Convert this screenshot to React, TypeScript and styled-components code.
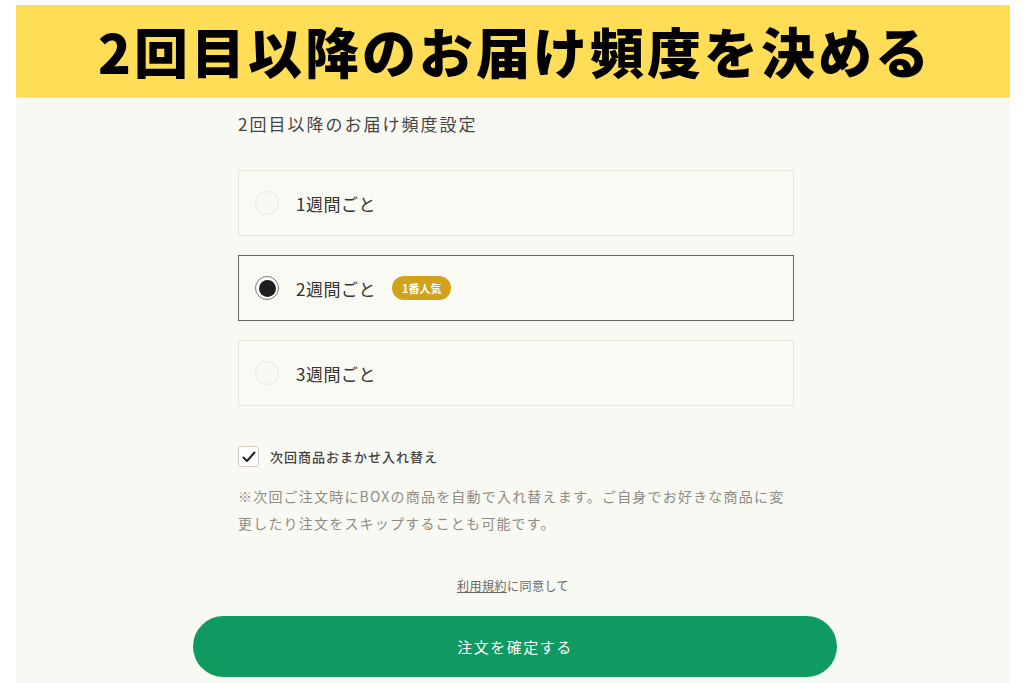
import React, { useState } from "react";
import styled, { createGlobalStyle } from "styled-components";

const GlobalStyle = createGlobalStyle`
  html, body {
    margin: 0;
    padding: 0;
    background: #ffffff;
  }
  body {
    font-family: "Noto Sans CJK JP", "Noto Sans", sans-serif;
    color: #333;
  }
`;

const Page = styled.div`
  padding: 5px 14px 0 16px;
  height: 683px;
  box-sizing: border-box;
  overflow: hidden;
`;

const Panel = styled.div`
  background: #f9f9f3;
  height: 678px;
  display: flex;
  flex-direction: column;
`;

const Header = styled.div`
  height: 93px;
  flex-shrink: 0;
  background: #ffdd57;
  display: flex;
  align-items: center;
  justify-content: center;
  border-bottom: 1px solid #fbe9a4;
  box-sizing: border-box;
`;

const HeaderTitle = styled.h1`
  margin: 0;
  font-size: 54px;
  font-weight: 900;
  letter-spacing: 3px;
  color: #000;
  line-height: 1;
  padding-left: 4px;
`;

const Content = styled.div`
  width: 556px;
  margin: 0 auto;
  padding-top: 15px;
  padding-left: 6px;
  display: flex;
  flex-direction: column;
`;

const SectionTitle = styled.div`
  font-size: 17px;
  letter-spacing: 2px;
  line-height: 22px;
  color: #444;
  margin-bottom: 35px;
`;

const OptionList = styled.div`
  display: flex;
  flex-direction: column;
  gap: 19px;
`;

const OptionBox = styled.label<{ $selected: boolean }>`
  height: 66px;
  box-sizing: border-box;
  display: flex;
  align-items: center;
  padding-left: 16px;
  border: ${(p) => (p.$selected ? "1.5px solid #666" : "1px solid #ebe6d3")};
  background: #fafaf4;
  cursor: pointer;
`;

const Radio = styled.span<{ $selected: boolean }>`
  width: 24px;
  height: 24px;
  border-radius: 50%;
  box-sizing: border-box;
  border: ${(p) => (p.$selected ? "1.5px solid #777" : "1px solid #e8e8e4")};
  background: ${(p) => (p.$selected ? "#fff" : "#f8f8f4")};
  display: flex;
  align-items: center;
  justify-content: center;
  flex-shrink: 0;

  &::after {
    content: "";
    display: ${(p) => (p.$selected ? "block" : "none")};
    width: 17px;
    height: 17px;
    border-radius: 50%;
    background: #1e1e1e;
  }
`;

const OptionLabel = styled.span`
  margin-left: 17px;
  font-size: 17px;
  letter-spacing: 0.5px;
  color: #333;
`;

const Badge = styled.span`
  margin-left: 16px;
  height: 24px;
  padding: 0 10px;
  border-radius: 12px;
  background: #d2a21a;
  color: #fff;
  font-size: 11px;
  font-weight: 700;
  display: inline-flex;
  align-items: center;
`;

const CheckRow = styled.label`
  display: flex;
  align-items: center;
  margin-top: 40px;
  cursor: pointer;
`;

const CheckBox = styled.span`
  width: 21px;
  height: 21px;
  box-sizing: border-box;
  border: 1px solid #cfcabb;
  border-radius: 3px;
  background: #fff;
  display: flex;
  align-items: center;
  justify-content: center;
`;

const CheckLabel = styled.span`
  margin-left: 11px;
  font-size: 13px;
  font-weight: 500;
  letter-spacing: 1px;
  color: #444;
`;

const Note = styled.p`
  margin: 16px 0 0;
  font-size: 14px;
  line-height: 27px;
  letter-spacing: 1.2px;
  white-space: nowrap;
  color: #8f8c84;
`;

const Terms = styled.div`
  margin-top: 40px;
  text-align: center;
  font-size: 12px;
  letter-spacing: 0.5px;
  line-height: 18px;
  color: #666;
`;

const TermsLink = styled.span`
  text-decoration: underline;
  color: #666;
`;

const SubmitButton = styled.button`
  align-self: center;
  flex-shrink: 0;
  margin-top: 21px;
  margin-left: 4px;
  width: 644px;
  height: 61px;
  border: none;
  border-radius: 31px;
  background: #109a62;
  color: #fff;
  font-family: "Noto Sans CJK JP", "Noto Sans", sans-serif;
  font-size: 15px;
  letter-spacing: 1.5px;
  cursor: pointer;
`;

const options = [
  { id: 1, label: "1週間ごと" },
  { id: 2, label: "2週間ごと", badge: "1番人気" },
  { id: 3, label: "3週間ごと" },
];

const App = () => {
  const [selected, setSelected] = useState(2);

  return (
    <Page>
      <GlobalStyle />
      <Panel>
        <Header>
          <HeaderTitle>2回目以降のお届け頻度を決める</HeaderTitle>
        </Header>
        <Content>
          <SectionTitle>2回目以降のお届け頻度設定</SectionTitle>
          <OptionList>
            {options.map((o) => (
              <OptionBox
                key={o.id}
                $selected={selected === o.id}
                onClick={() => setSelected(o.id)}
              >
                <Radio $selected={selected === o.id} />
                <OptionLabel>{o.label}</OptionLabel>
                {o.badge && <Badge>{o.badge}</Badge>}
              </OptionBox>
            ))}
          </OptionList>
          <CheckRow>
            <CheckBox>
              <svg width="14" height="12" viewBox="0 0 14 12">
                <path
                  d="M1.5 6.5 L5 10 L12.5 1.5"
                  fill="none"
                  stroke="#222"
                  strokeWidth="2"
                  strokeLinecap="round"
                  strokeLinejoin="round"
                />
              </svg>
            </CheckBox>
            <CheckLabel>次回商品おまかせ入れ替え</CheckLabel>
          </CheckRow>
          <Note>
            ※次回ご注文時にBOXの商品を自動で入れ替えます。ご自身でお好きな商品に変
            <br />
            更したり注文をスキップすることも可能です。
          </Note>
        </Content>
        <Terms>
          <TermsLink>利用規約</TermsLink>に同意して
        </Terms>
        <SubmitButton>注文を確定する</SubmitButton>
      </Panel>
    </Page>
  );
};

export default App;
